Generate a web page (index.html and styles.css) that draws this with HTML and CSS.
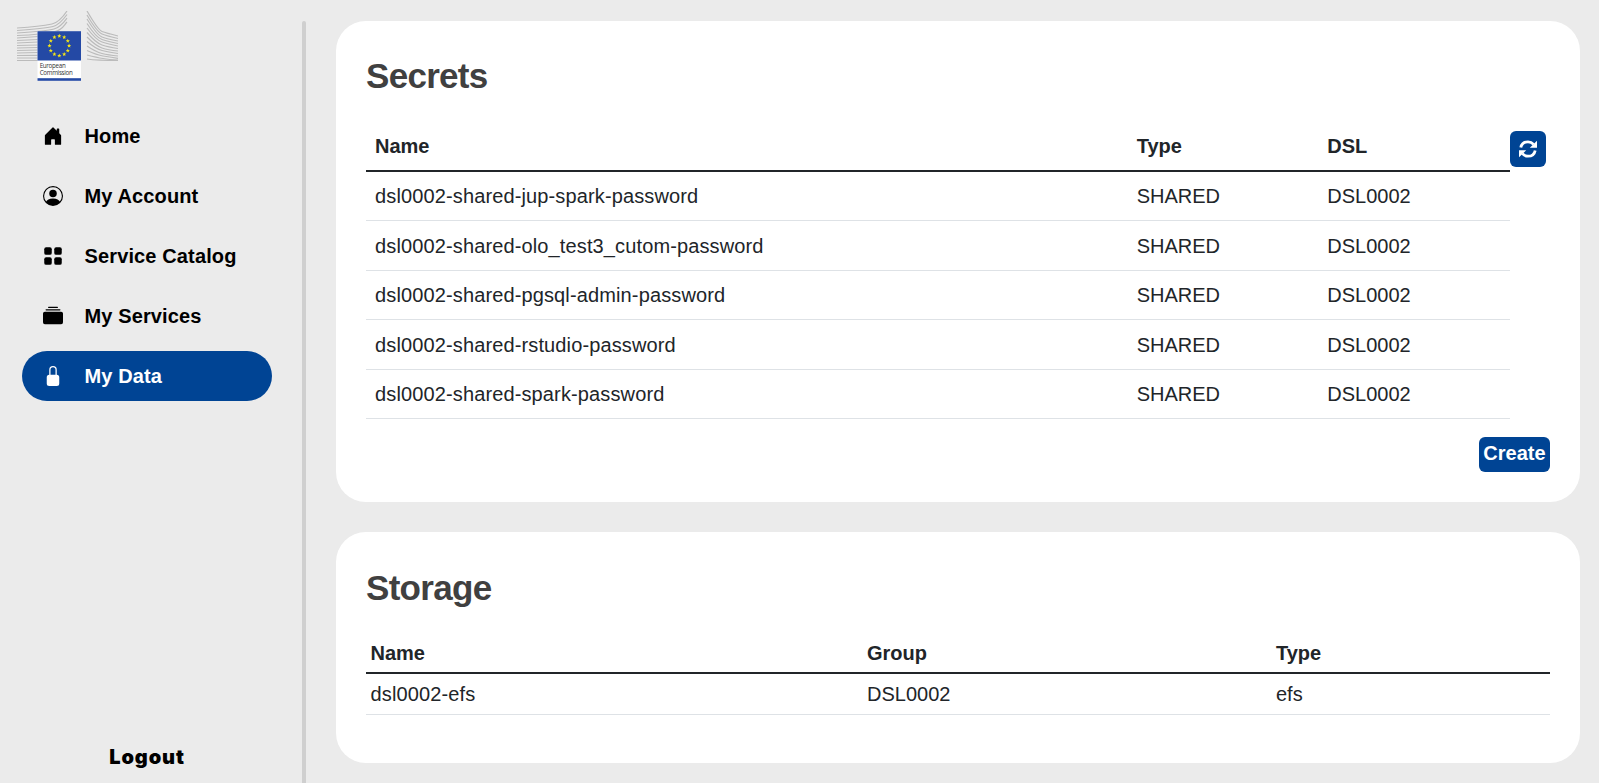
FILE: index.html
```html
<!DOCTYPE html>
<html lang="en">
<head>
<meta charset="utf-8">
<title>My Data</title>
<link rel="stylesheet" href="styles.css">
</head>
<body>
<div class="app">
  <aside class="sidebar">
    <svg class="logo" viewBox="0 0 102 72" aria-label="European Commission">
      <g class="logo-lines">
        <path d="M0 17C15 16 30 14 35 13S46 6 50 0M0 19.5C15 18.500 30 17 36 15.500S46 9 50 3.500M0 22C15 21 30 20 37 18S47 11 50 7M0 24.500C15 24 30 22.500 38 20.500S47 14 50 11M0 27L21 25.500M0 29.500L21 28.500M0 32L21 31M0 34.500L21 34M0 37L21 36.500M0 39.500L21 39M0 42L21 41.500M0 44.500L21 44.300M0 47L21 47M0 49.500L21 49.500"/>
        <path d="M70 0Q81 19 85 20.500T101 25M70 4Q80 21 85 23T101 27.500M70 8Q80 24 85 26T101 30M70 12.500Q79 26.500 85 28.500T101 32.500M70 17Q79 29 85 31T101 35M70 21.500Q79 32 85 34T101 37.500M70 26Q79 35 85 37T101 40M70 30.500Q79 38 85 39.500T101 42.500M70 35Q79 41 85 42.500T101 45M70 39.500Q80 44 86 45T101 47.300M70 44Q80 46.500 86 47.500T101 49.200M70 48Q80 49.500 101 49.500"/>
      </g>
      <rect class="logo-white" x="20.500" y="20" width="43.500" height="50"/>
      <rect class="logo-blue" x="20.500" y="20.200" width="43.500" height="29.300"/>
      <rect class="logo-blue" x="20.500" y="67.200" width="43.500" height="2.600"/>
      <defs><path id="star" d="M0-2.100L.6-.6 2.100-.6.9.4 1.300 1.900 0 1-1.300 1.900-.9.400-2.100-.6-.6-.6Z"/></defs>
      <g class="logo-stars" transform="translate(42.300 34.700)">
        <use href="#star" y="-9.800"/><use href="#star" x="4.900" y="-8.500"/><use href="#star" x="8.500" y="-4.900"/><use href="#star" x="9.800"/>
        <use href="#star" x="8.500" y="4.900"/><use href="#star" x="4.900" y="8.500"/><use href="#star" y="9.800"/><use href="#star" x="-4.900" y="8.500"/>
        <use href="#star" x="-8.500" y="4.900"/><use href="#star" x="-9.800"/><use href="#star" x="-8.500" y="-4.900"/><use href="#star" x="-4.900" y="-8.500"/>
      </g>
      <text class="logo-text" x="22.700" y="57" textLength="26">European</text>
      <text class="logo-text" x="22.700" y="64" textLength="33">Commission</text>
    </svg>
    <nav class="menu">
      <a class="menu-item"><svg class="icon" viewBox="0 0 16 16"><path d="M6.500 14.500v-3.505c0-.245.25-.495.5-.495h2c.25 0 .5.25.5.5v3.500a.5.5 0 0 0 .5.5h4a.5.5 0 0 0 .5-.5v-7a.5.5 0 0 0-.146-.354L13 5.793V2.500a.5.5 0 0 0-.5-.5h-1a.5.5 0 0 0-.5.5v1.293L8.354 1.146a.5.5 0 0 0-.708 0l-6 6A.5.5 0 0 0 1.500 7.500v7a.5.5 0 0 0 .5.5h4a.5.5 0 0 0 .5-.5Z"/></svg>Home</a>
      <a class="menu-item"><svg class="icon" viewBox="0 0 16 16"><path d="M11 6a3 3 0 1 1-6 0 3 3 0 0 1 6 0z"/><path fill-rule="evenodd" d="M0 8a8 8 0 1 1 16 0A8 8 0 0 1 0 8zm8-7a7 7 0 0 0-5.468 11.370C3.242 11.226 4.805 10 8 10s4.757 1.225 5.468 2.370A7 7 0 0 0 8 1z"/></svg>My Account</a>
      <a class="menu-item"><svg class="icon" viewBox="0 0 16 16"><rect x="1" y="1" width="6" height="6" rx="1.500"/><rect x="9" y="1" width="6" height="6" rx="1.500"/><rect x="1" y="9" width="6" height="6" rx="1.500"/><rect x="9" y="9" width="6" height="6" rx="1.500"/></svg>Service Catalog</a>
      <a class="menu-item"><svg class="icon" viewBox="0 0 16 16"><path d="M0 13a1.500 1.500 0 0 0 1.500 1.500h13A1.500 1.500 0 0 0 16 13V6a1.500 1.500 0 0 0-1.500-1.500h-13A1.500 1.500 0 0 0 0 6v7zM2 3a.5.5 0 0 0 .5.5h11a.5.5 0 0 0 0-1h-11A.5.5 0 0 0 2 3zm2-2a.5.5 0 0 0 .5.5h7a.5.5 0 0 0 0-1h-7A.5.5 0 0 0 4 1z"/></svg>My Services</a>
      <a class="menu-item active"><svg class="icon" viewBox="0 0 16 16"><path d="M8 1a2 2 0 0 1 2 2v4H6V3a2 2 0 0 1 2-2zm3 6V3a3 3 0 0 0-6 0v4a2 2 0 0 0-2 2v5a2 2 0 0 0 2 2h6a2 2 0 0 0 2-2V9a2 2 0 0 0-2-2z"/></svg>My Data</a>
    </nav>
    <a class="logout">Logout</a>
  </aside>
  <div class="divider"></div>
  <main class="content">
    <section class="card secrets">
      <h1>Secrets</h1>
      <div class="table-row">
        <table class="table secrets-table">
          <thead><tr><th class="wide">Name</th><th>Type</th><th>DSL</th></tr></thead>
          <tbody>
            <tr><td>dsl0002-shared-jup-spark-password</td><td>SHARED</td><td>DSL0002</td></tr>
            <tr><td>dsl0002-shared-olo_test3_cutom-password</td><td>SHARED</td><td>DSL0002</td></tr>
            <tr><td>dsl0002-shared-pgsql-admin-password</td><td>SHARED</td><td>DSL0002</td></tr>
            <tr><td>dsl0002-shared-rstudio-password</td><td>SHARED</td><td>DSL0002</td></tr>
            <tr><td>dsl0002-shared-spark-password</td><td>SHARED</td><td>DSL0002</td></tr>
          </tbody>
        </table>
        <button class="refresh" aria-label="Refresh"><svg viewBox="0 0 18 18"><path class="arc" d="M1.800 7.600C2.500 4 5.500 1.800 9 1.800c2.300 0 4.200 1 5.600 2.600M16.200 10.400C15.500 14 12.500 16.200 9 16.200c-2.300 0-4.200-1-5.600-2.600"/><path class="head" d="M18 .8v6.900h-7.200zM0 17.200v-6.900h7.200z"/></svg></button>
      </div>
      <div class="actions"><button class="create">Create</button></div>
    </section>
    <section class="card storage">
      <h1>Storage</h1>
      <table class="table storage-table">
        <thead><tr><th class="c-name">Name</th><th class="c-group">Group</th><th>Type</th></tr></thead>
        <tbody><tr><td>dsl0002-efs</td><td>DSL0002</td><td>efs</td></tr></tbody>
      </table>
    </section>
  </main>
</div>
</body>
</html>
```
FILE: styles.css
```css
* { box-sizing: border-box; }
body {
  margin: 0;
  height: 783px;
  overflow: hidden;
  background: #ebebeb;
  color: #212529;
  font: 20px/30px "Liberation Sans", Arial, sans-serif;
}
.app { display: flex; height: 100%; }
.sidebar { display: flex; flex-direction: column; width: 302px; padding: 11px 30px 11px 22px; color: #000; }
.logo { display: block; width: 102px; height: 72px; margin-left: -5px; flex: none; }
.logo-lines { fill: none; stroke: #bbb; stroke-width: 1.200; }
.logo-white { fill: #fff; }
.logo-blue { fill: #2449a5; }
.logo-stars { fill: #f5e617; }
.logo-text { font: 6.200px "Open Sans", sans-serif; fill: #333; }
.menu { display: flex; flex-direction: column; gap: 10px; margin-top: 28px; }
.menu-item { display: flex; align-items: center; gap: 21.500px; height: 50px; padding-left: 21px; border-radius: 25px; font-weight: 700; letter-spacing: 0.130px; }
.menu-item.active { background: #004494; color: #fff; }
.icon { width: 20px; height: 20px; fill: currentColor; }
.logout { margin-top: auto; text-align: center; font: 900 20px/30px Inter, sans-serif; letter-spacing: 0.900px; }
.divider { width: 4px; margin-top: 21px; border-radius: 2px 2px 0 0; background: #cfcfcf; }
.content { display: flex; flex-direction: column; gap: 30px; flex: 1; padding: 21px 19px 20px 30px; }
.card { padding: 30px; border-radius: 30px; background: #fff; }
.secrets { height: 481px; }
.storage { height: 231px; }
h1 { margin: 0; font-size: 35px; line-height: 50px; letter-spacing: -0.700px; color: #404040; }
.storage h1 { padding-top: 1px; }
.table { border-collapse: separate; border-spacing: 0; table-layout: fixed; text-align: left; }
.table th, .table td { border-bottom: 1px solid #dee2e6; }
.table th { border-bottom: 2px solid #212529; }
.table td:first-child { letter-spacing: 0.130px; }
.table-row { display: flex; margin-top: 20px; }
.secrets-table { width: 1144px; }
.secrets-table th, .secrets-table td { padding: 0 8px; }
.secrets-table th:first-child, .secrets-table td:first-child { padding-left: 9px; }
.secrets-table th { height: 51px; padding-top: 1px; }
.secrets-table td { height: 49px; }
.secrets-table tr:nth-child(even) td { height: 50px; }
.wide { width: 66.667%; }
button { border: 0; background: #004494; color: #fff; border-radius: 6px; }
.refresh { display: grid; place-items: center; width: 36px; height: 36px; margin-top: 10px; padding: 0; }
.refresh svg { width: 18px; height: 18px; }
.arc { fill: none; stroke: #fff; stroke-width: 2.800; }
.head { fill: #fff; }
.actions { display: flex; justify-content: flex-end; margin-top: 18px; }
.create { width: 71px; height: 35px; padding: 0 0 4px; font: 700 20px/30px "Liberation Sans", Arial, sans-serif; }
.storage-table { width: 100%; margin-top: 19px; }
.storage-table th, .storage-table td { padding: 0 4px; height: 41px; }
.storage-table th { height: 42px; padding-top: 2px; }
.storage-table th:first-child, .storage-table td:first-child { padding-left: 4.500px; }
.c-name { width: 497px; }
.c-group { width: 409px; }
```
